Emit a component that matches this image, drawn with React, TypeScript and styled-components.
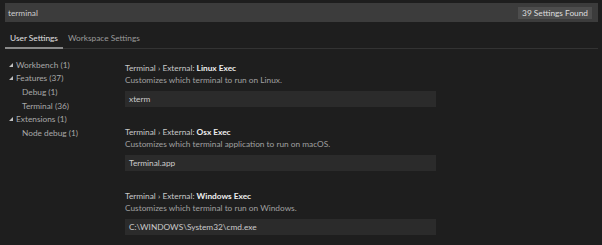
import React from 'react'
import styled, { createGlobalStyle } from 'styled-components'

const GlobalStyle = createGlobalStyle`
  html, body {
    margin: 0;
    padding: 0;
    background: #1e1e1e;
  }
  body {
    font-family: Lato, "Open Sans", sans-serif;
    font-size: 8.3px;
    color: #cccccc;
  }
`

const Page = styled.div`
  width: 602px;
  height: 245px;
  overflow: hidden;
  padding: 3px 4px 0 5px;
  box-sizing: border-box;
`

const SearchBar = styled.div`
  height: 19px;
  background: #3c3c3c;
  display: flex;
  align-items: center;
  justify-content: space-between;
  padding: 0 6px 0 3px;
`

const SearchText = styled.span`
  color: #cccccc;
`

const Badge = styled.span`
  background: #4d4d4d;
  color: #dddddd;
  height: 12px;
  line-height: 12px;
  padding: 0 4px;
`

const TabRow = styled.div`
  display: flex;
  height: 26px;
  align-items: flex-end;
  border-bottom: 1px solid #333333;
`

const Tab = styled.div<{ $active?: boolean }>`
  padding: 0 5px 3px;
  line-height: 11px;
  color: ${(p) => (p.$active ? '#e0e0e0' : '#9a9a9a')};
  border-bottom: 2px solid ${(p) => (p.$active ? '#8a8a8a' : 'transparent')};
  margin-bottom: -1px;
`

const Body = styled.div`
  display: flex;
  padding-top: 9px;
`

const Tree = styled.ul`
  list-style: none;
  margin: 0;
  padding: 0;
  width: 120px;
  flex-shrink: 0;
`

const TreeRow = styled.li<{ $depth: number }>`
  display: flex;
  align-items: center;
  height: 13.6px;
  padding-left: ${(p) => (p.$depth ? 17 : 0)}px;
  color: #a8a8a8;
`

const Twistie = styled.span`
  width: 11px;
  display: flex;
  justify-content: center;
  svg {
    display: block;
  }
`

const Settings = styled.div`
  flex: 1;
  display: flex;
  flex-direction: column;
  gap: 19px;
  padding-top: 4px;
`

const Setting = styled.div`
  display: flex;
  flex-direction: column;
`

const Title = styled.div`
  height: 12px;
  line-height: 12px;
  color: #c8c8c8;
  b {
    color: #eeeeee;
  }
`

const Desc = styled.div`
  height: 12px;
  line-height: 12px;
  color: #a0a0a0;
`

const Input = styled.div`
  margin-top: 5px;
  width: 311px;
  height: 16px;
  line-height: 16px;
  background: #2b2b2b;
  padding-left: 4px;
  box-sizing: border-box;
  color: #cccccc;
`

const tree = [
  { label: 'Workbench (1)', depth: 0 },
  { label: 'Features (37)', depth: 0 },
  { label: 'Debug (1)', depth: 1 },
  { label: 'Terminal (36)', depth: 1 },
  { label: 'Extensions (1)', depth: 0 },
  { label: 'Node debug (1)', depth: 1 },
]

const settings = [
  { name: 'Linux Exec', desc: 'Customizes which terminal to run on Linux.', value: 'xterm' },
  { name: 'Osx Exec', desc: 'Customizes which terminal application to run on macOS.', value: 'Terminal.app' },
  { name: 'Windows Exec', desc: 'Customizes which terminal to run on Windows.', value: 'C:\\WINDOWS\\System32\\cmd.exe' },
]

function Arrow() {
  return (
    <svg width="4" height="4" viewBox="0 0 4 4">
      <path d="M4 0 L4 4 L0 4 Z" fill="#c0c0c0" />
    </svg>
  )
}

export default function App() {
  return (
    <>
      <GlobalStyle />
      <Page>
        <SearchBar>
          <SearchText>terminal</SearchText>
          <Badge>39 Settings Found</Badge>
        </SearchBar>
        <TabRow>
          <Tab $active>User Settings</Tab>
          <Tab>Workspace Settings</Tab>
        </TabRow>
        <Body>
          <Tree>
            {tree.map((t) => (
              <TreeRow key={t.label} $depth={t.depth}>
                {t.depth === 0 && <Twistie><Arrow /></Twistie>}
                {t.label}
              </TreeRow>
            ))}
          </Tree>
          <Settings>
            {settings.map((s) => (
              <Setting key={s.name}>
                <Title>Terminal › External: <b>{s.name}</b></Title>
                <Desc>{s.desc}</Desc>
                <Input>{s.value}</Input>
              </Setting>
            ))}
          </Settings>
        </Body>
      </Page>
    </>
  )
}
